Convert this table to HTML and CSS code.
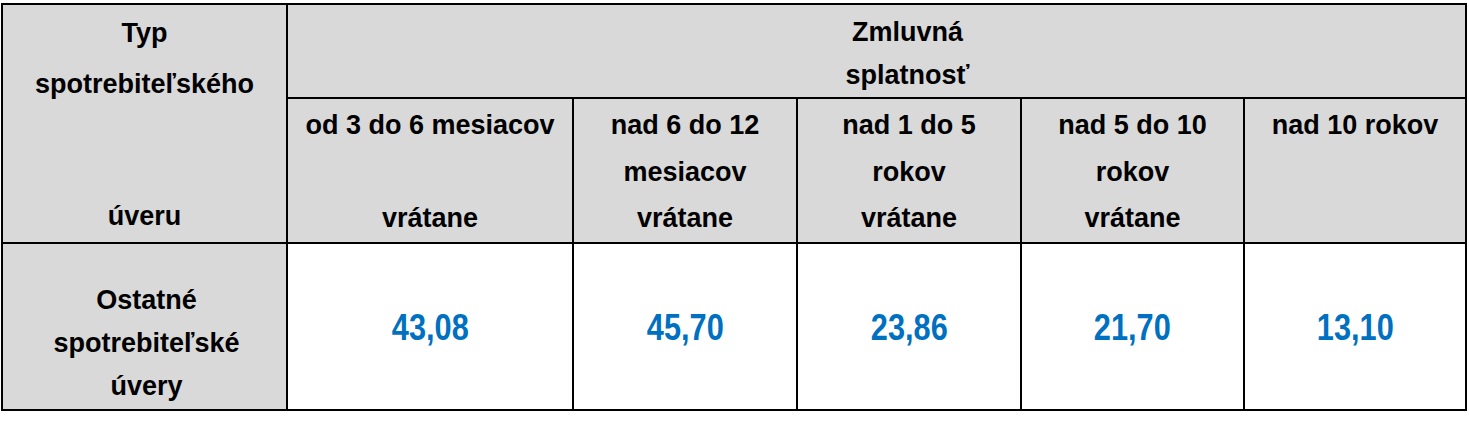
FILE: index.html
```html
<!DOCTYPE html>
<html lang="sk">
<head>
<meta charset="utf-8">
<title>Zmluvná splatnosť</title>
<link rel="stylesheet" href="styles.css">
</head>
<body>
<div class="wrap">
<table class="rates">
  <colgroup>
    <col class="c-type">
    <col class="c-a">
    <col class="c-b">
    <col class="c-c">
    <col class="c-d">
    <col class="c-e">
  </colgroup>
  <thead>
    <tr class="r-top">
      <th rowspan="2" class="type-head">
        <div class="type-stack">
          <div class="type-top"><span>Typ</span><span>spotrebiteľského</span></div>
          <div class="type-bottom">úveru</div>
        </div>
      </th>
      <th colspan="5" class="group-head"><span>Zmluvná</span><span>splatnosť</span></th>
    </tr>
    <tr class="r-sub">
      <th class="sub"><div class="sub-stack"><span>od 3 do 6 mesiacov</span><span>&nbsp;</span><span>vrátane</span></div></th>
      <th class="sub"><div class="sub-stack"><span>nad 6 do 12</span><span>mesiacov</span><span>vrátane</span></div></th>
      <th class="sub"><div class="sub-stack"><span>nad 1 do 5</span><span>rokov</span><span>vrátane</span></div></th>
      <th class="sub"><div class="sub-stack"><span>nad 5 do 10</span><span>rokov</span><span>vrátane</span></div></th>
      <th class="sub"><div class="sub-stack"><span>nad 10 rokov</span><span>&nbsp;</span><span>&nbsp;</span></div></th>
    </tr>
  </thead>
  <tbody>
    <tr class="r-body">
      <th class="row-head"><div class="row-stack"><span>Ostatné</span><span>spotrebiteľské</span><span>úvery</span></div></th>
      <td class="num"><span class="val">43,08</span></td>
      <td class="num"><span class="val">45,70</span></td>
      <td class="num"><span class="val">23,86</span></td>
      <td class="num"><span class="val">21,70</span></td>
      <td class="num"><span class="val">13,10</span></td>
    </tr>
  </tbody>
</table>
</div>
</body>
</html>
```

FILE: styles.css
```css
html, body {
  margin: 0;
  padding: 0;
  background: #ffffff;
}

.wrap {
  padding: 3px 0 0 1px;
}

.rates {
  border-collapse: collapse;
  table-layout: fixed;
  width: 1466px;
  font-family: "Liberation Sans", Arial, sans-serif;
  font-weight: bold;
  font-size: 27px;
  color: #000000;
}

.c-type { width: 285px; }
.c-a { width: 286px; }
.c-b { width: 224px; }
.c-c { width: 224px; }
.c-d { width: 223px; }
.c-e { width: 222px; }

.rates th,
.rates td {
  border: 2px solid #000000;
  padding: 0;
  text-align: center;
}

.rates th {
  background: #d9d9d9;
  font-weight: bold;
}

.r-top { height: 94px; }
.r-sub { height: 144px; }
.r-body { height: 167px; }

.type-head {
  vertical-align: top;
}

.type-stack {
  display: flex;
  flex-direction: column;
  justify-content: space-between;
  height: 236px;
}

.type-top {
  display: flex;
  flex-direction: column;
  padding-top: 3px;
  line-height: 51px;
}

.type-bottom {
  line-height: 47px;
  padding-bottom: 1px;
}

.group-head {
  vertical-align: top;
  padding-left: 62px !important;
}

.group-head span {
  display: block;
  line-height: 43px;
}

.group-head span:first-child {
  padding-top: 6px;
}

.sub {
  vertical-align: top;
}

.sub-stack {
  display: flex;
  flex-direction: column;
  padding-top: 3px;
  line-height: 46.5px;
}

.row-head {
  vertical-align: bottom;
}

.row-stack {
  display: flex;
  flex-direction: column;
  line-height: 43px;
  padding-bottom: 1px;
  padding-left: 4px;
}

.num {
  background: #ffffff;
  vertical-align: middle;
}

.val {
  display: inline-block;
  font-family: "Liberation Sans Narrow", "Arial Narrow", "Liberation Sans", sans-serif;
  font-weight: bold;
  font-size: 37px;
  color: #0070c0;
  transform: scaleX(0.83);
  padding-top: 4px;
}
```
